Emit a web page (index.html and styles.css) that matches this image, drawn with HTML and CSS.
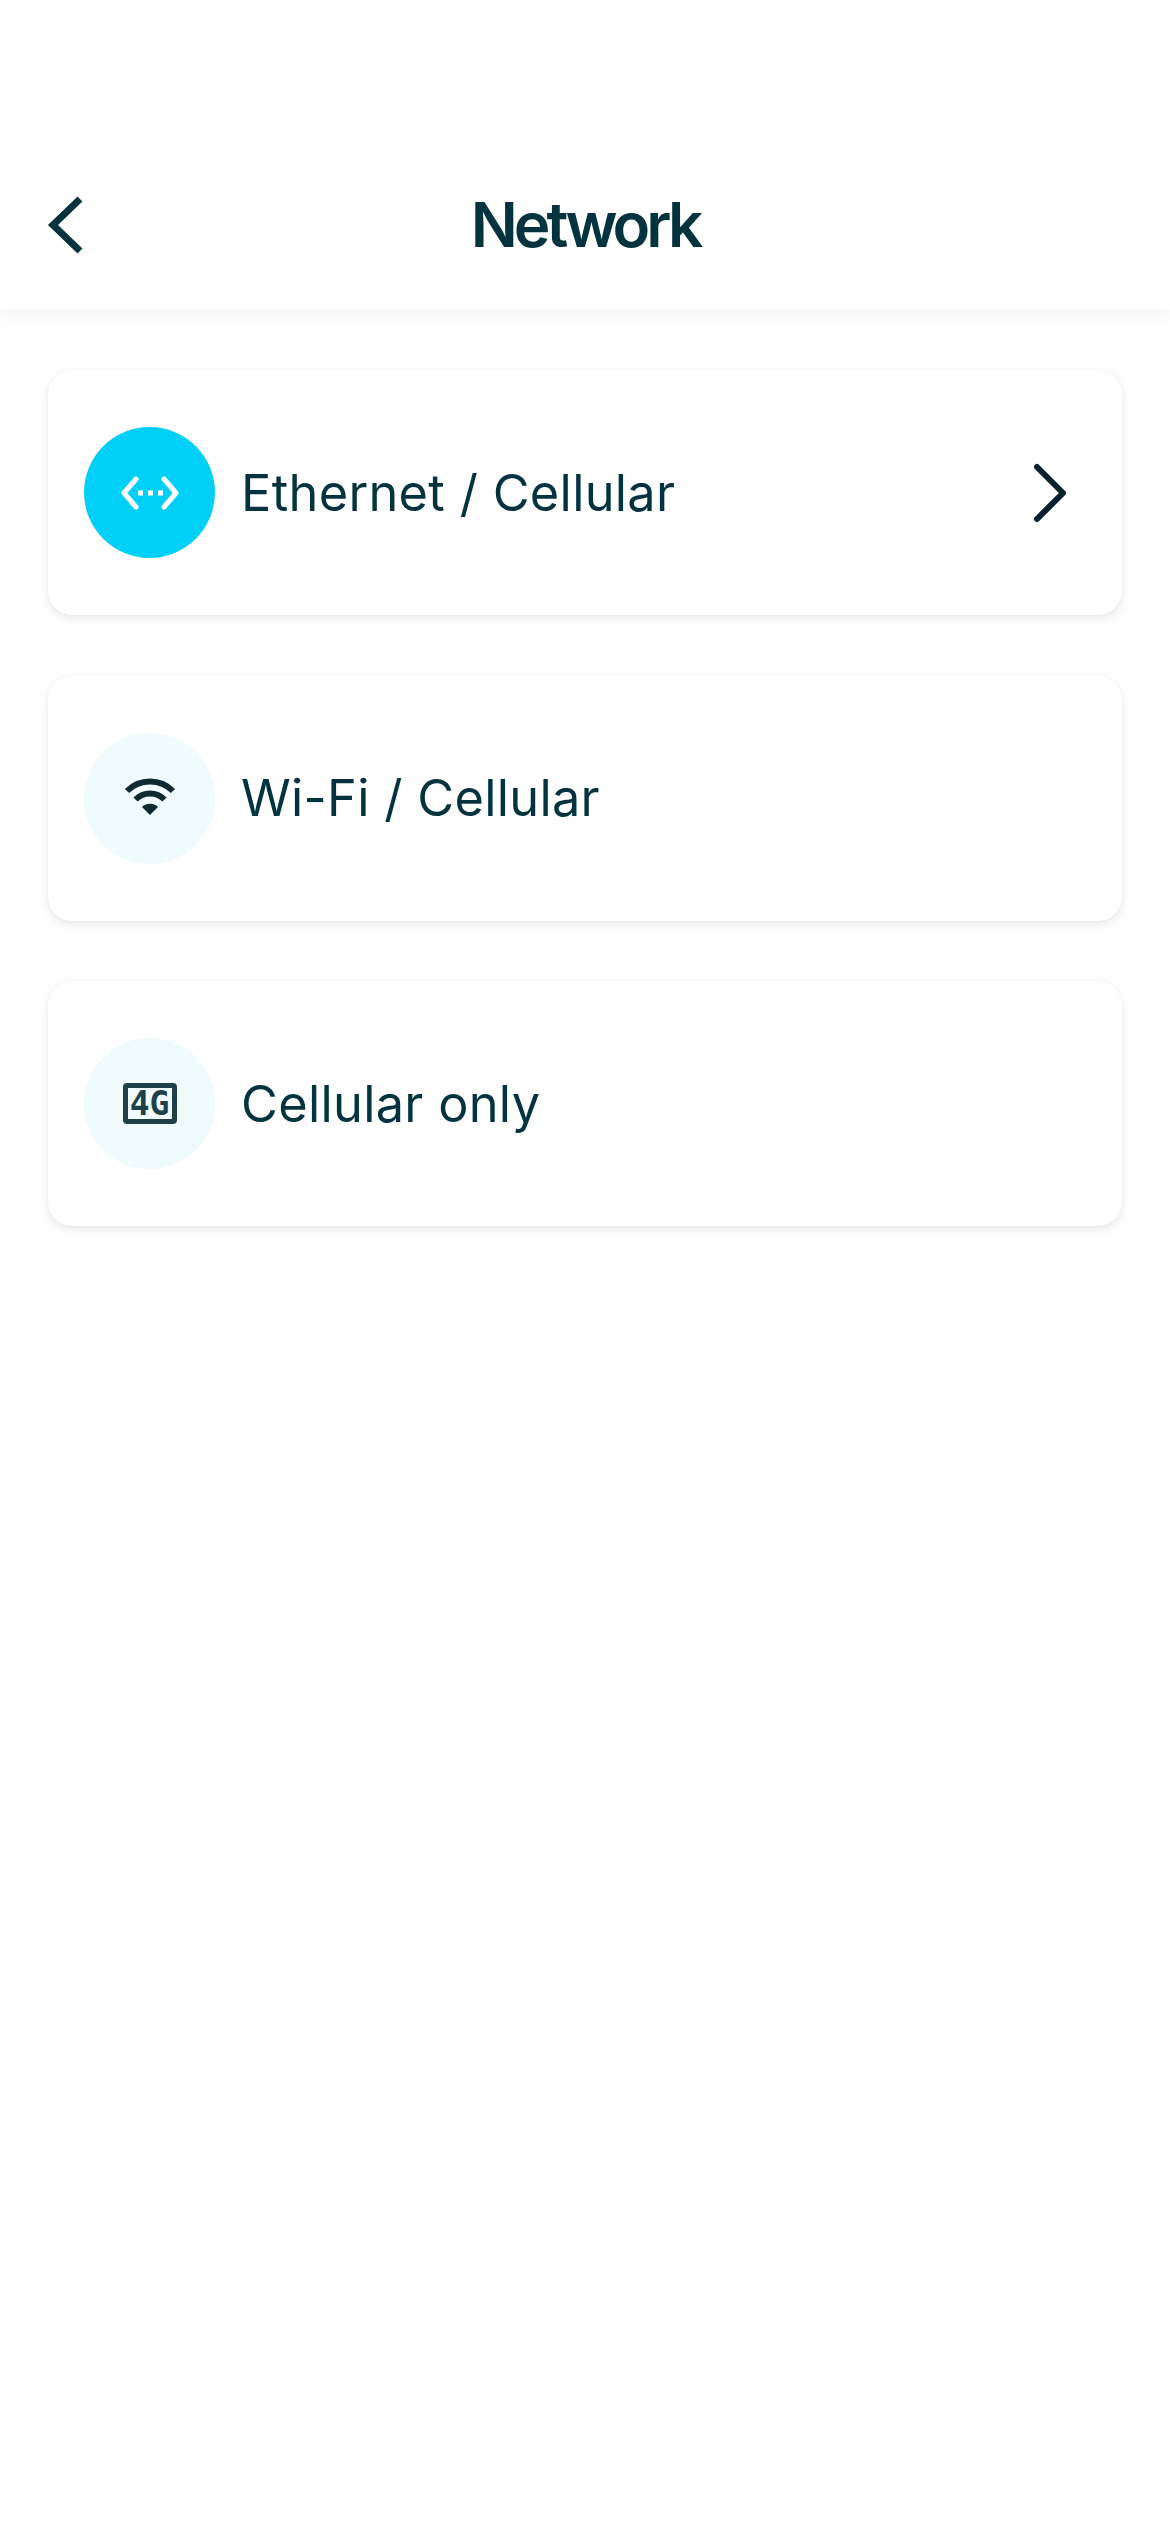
FILE: index.html
```html
<!DOCTYPE html>
<html lang="en">
<head>
	<meta charset="UTF-8">
	<title>Network</title>
	<link rel="stylesheet" href="styles.css">
</head>
<body>
<header class="topbar">
	<a class="back">
		<svg width="40" height="64" viewBox="0 0 40 64"><path d="M35 6 L8 32 L35 58" class="back-line"/></svg>
	</a>
	<h1 class="title">Network</h1>
	<span></span>
</header>
<main class="list">
	<div class="card">
		<div class="badge badge-on">
			<svg width="60" height="36" viewBox="0 0 60 36">
				<path d="M16 4 L4 18 L16 32 M44 4 L56 18 L44 32" class="eth-line"/>
				<rect x="18" y="15.5" width="5" height="5" fill="#fff"/>
				<rect x="28" y="15.5" width="5" height="5" fill="#fff"/>
				<rect x="38" y="15.5" width="5" height="5" fill="#fff"/>
			</svg>
		</div>
		<span class="label">Ethernet / Cellular</span>
		<svg class="more" width="36" height="60" viewBox="0 0 36 60"><path d="M5 4 L31 30 L5 56" class="more-line"/></svg>
	</div>
	<div class="card">
		<div class="badge">
			<svg width="60" height="44" viewBox="0 0 60 44">
				<path d="M7 15 A32.5 32.5 0 0 1 53 15" class="wifi-line"/>
				<path d="M15.5 23.5 A20.5 20.5 0 0 1 44.5 23.5" class="wifi-line"/>
				<path d="M22 31 A11.5 11.5 0 0 1 38 31 L30 39 Z" fill="#0f2a33"/>
			</svg>
		</div>
		<span class="label">Wi-Fi / Cellular</span>
	</div>
	<div class="card">
		<div class="badge">
			<div class="frame-4g">4G</div>
		</div>
		<span class="label">Cellular only</span>
	</div>
</main>
</body>
</html>
```

FILE: styles.css
```css
html, body {
	margin: 0;
	padding: 0;
}
body {
	width: 1170px;
	min-height: 2532px;
	background: #fefefe;
	font-family: Inter, "Liberation Sans", sans-serif;
	color: #03333f;
}

/* top bar */
.topbar {
	display: grid;
	grid-template-columns: 1fr auto 1fr;
	align-items: center;
	box-sizing: border-box;
	height: 309px;
	padding: 141px 45px 0;
	background: #fff;
	box-shadow: 0 8px 16px rgba(0, 0, 0, .035);
}
.back {
	display: flex;
}
.back-line {
	fill: none;
	stroke: #03333f;
	stroke-width: 7;
}
.title {
	margin: 0;
	font-size: 62px;
	font-weight: 600;
	letter-spacing: -4px;
	line-height: 70px;
}

/* rows */
.list {
	display: flex;
	flex-direction: column;
	gap: 60.5px;
	padding: 61px 48px 0;
}
.card {
	display: flex;
	align-items: center;
	gap: 26px;
	height: 245px;
	padding: 0 54px 0 36px;
	background: #fff;
	border-radius: 24px;
	box-shadow: 0 4px 8px rgba(0, 0, 0, .08), 0 0 3px rgba(0, 0, 0, .04);
}
.badge {
	display: flex;
	align-items: center;
	justify-content: center;
	flex: none;
	width: 131px;
	height: 131px;
	border-radius: 50%;
	background: #effbfd;
}
.badge-on {
	background: #00cff8;
}
.label {
	font-size: 50.5px;
	letter-spacing: .3px;
	line-height: 60px;
}
.more {
	margin-left: auto;
}
.more-line {
	fill: none;
	stroke: #04222e;
	stroke-width: 6;
	stroke-linecap: round;
	stroke-linejoin: round;
}
.eth-line {
	fill: none;
	stroke: #fff;
	stroke-width: 5;
	stroke-linecap: round;
	stroke-linejoin: round;
}
.wifi-line {
	fill: none;
	stroke: #0f2a33;
	stroke-width: 6;
}

/* 4G mark */
.frame-4g {
	display: flex;
	align-items: center;
	justify-content: center;
	box-sizing: border-box;
	width: 54px;
	height: 41px;
	border: 5px solid #1f4048;
	border-radius: 4px;
	font-family: "DejaVu Sans Mono", monospace;
	font-size: 33px;
	font-weight: 700;
	line-height: 1;
	color: #1f4048;
}
```
